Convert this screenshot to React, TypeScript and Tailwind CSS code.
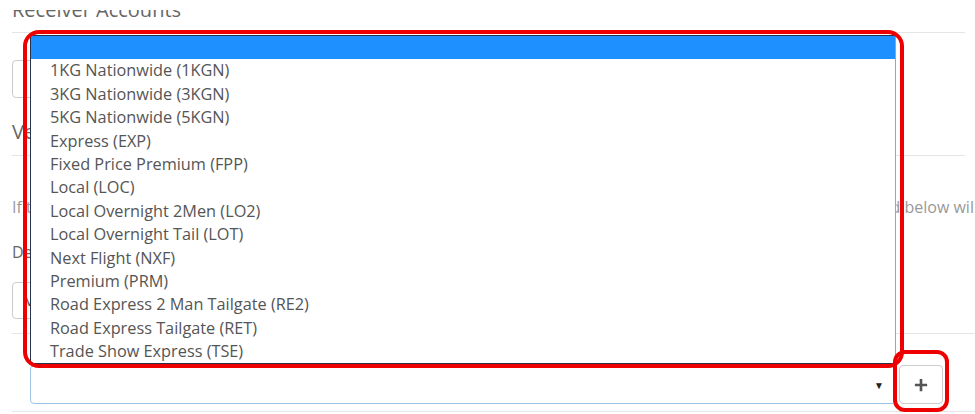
import React from 'react';

const services = [
  '',
  '1KG Nationwide (1KGN)',
  '3KG Nationwide (3KGN)',
  '5KG Nationwide (5KGN)',
  'Express (EXP)',
  'Fixed Price Premium (FPP)',
  'Local (LOC)',
  'Local Overnight 2Men (LO2)',
  'Local Overnight Tail (LOT)',
  'Next Flight (NXF)',
  'Premium (PRM)',
  'Road Express 2 Man Tailgate (RE2)',
  'Road Express Tailgate (RET)',
  'Trade Show Express (TSE)',
];

const PlusIcon: React.FC<{ className: string }> = ({ className }) => (
  <svg viewBox="0 0 16 16" className={className} fill="none" stroke="currentColor" strokeWidth="3">
    <path d="M8 1v14M1 8h14" />
  </svg>
);

const ServiceList: React.FC = () => (
  <div className="absolute left-[30px] top-[35px] w-[866px] border border-[#27324f] border-r-[#8fa7cc] bg-white">
    {services.map((s, i) => (
      <div
        key={i}
        className={`h-[23.4px] pl-[19px] text-[16.3px] leading-[23.4px] ${i === 0 ? 'bg-[#1e90ff]' : 'text-[#555]'}`}
      >
        {s}
      </div>
    ))}
  </div>
);

export default function App() {
  return (
    <div className="relative h-[414px] w-[975px] overflow-hidden bg-white font-['Open_Sans',sans-serif] text-[#555]">
      <div className="pl-3 pr-[10px]">
        {/* page is scrolled: only the lower part of this heading shows */}
        <div className="mt-[10px] h-[9px] overflow-hidden">
          <h3 className="-mt-[14px] text-[20px] leading-[28px] text-[#666]">Receiver Accounts</h3>
        </div>
        <div className="mt-[13px] h-px bg-[#e5e5e5]" />
        <div className="mt-[27px] h-[38px] w-[700px] rounded-[4px] border border-[#ccc]" />

        <h3 className="mt-[20px] text-[20px] leading-[28px] text-[#666]">Vehicle Types</h3>
        <div className="mt-[9px] h-px bg-[#e5e5e5]" />

        <p className="-mr-[10px] mt-[40px] overflow-hidden whitespace-nowrap text-[16px] leading-[22px] text-[#999]">
          If the receiver has an account with one of these services, choose the service and enter the account number as indicated below will be used
        </p>
        <div className="mt-[23px] text-[16px] leading-[22px] text-[#666]">Default Vehicle Type</div>
        <div className="mt-[19px] flex h-[37px] w-[700px] items-center rounded-[4px] border border-[#ccc] px-3 text-[15px] text-[#555]">
          Van
        </div>
        <div className="-mr-[10px] mt-[14px] h-px bg-[#e5e5e5]" />

        <div className="ml-[18px] mt-[31px] flex h-[39px] gap-[3px]">
          <div className="flex w-[866px] items-center justify-end rounded-[4px] border border-[#9ec3e6] pr-[11px]">
            <span className="text-[10px] leading-none text-[#222]">▼</span>
          </div>
          <div className="flex w-[44px] items-center justify-center rounded-[4px] border border-[#ccc] text-[#555]">
            <PlusIcon className="h-[14px] w-[14px]" />
          </div>
        </div>
        <div className="-mr-[10px] mt-[7px] h-px bg-[#e5e5e5]" />
      </div>

      <ServiceList />

      <div className="absolute left-[23px] top-[30px] h-[338px] w-[881px] rounded-[16px] border-[4px] border-[#ee0000]" />
      <div className="absolute left-[893px] top-[350px] h-[62px] w-[56px] rounded-[12px] border-[4px] border-[#ee0000]" />
    </div>
  );
}
